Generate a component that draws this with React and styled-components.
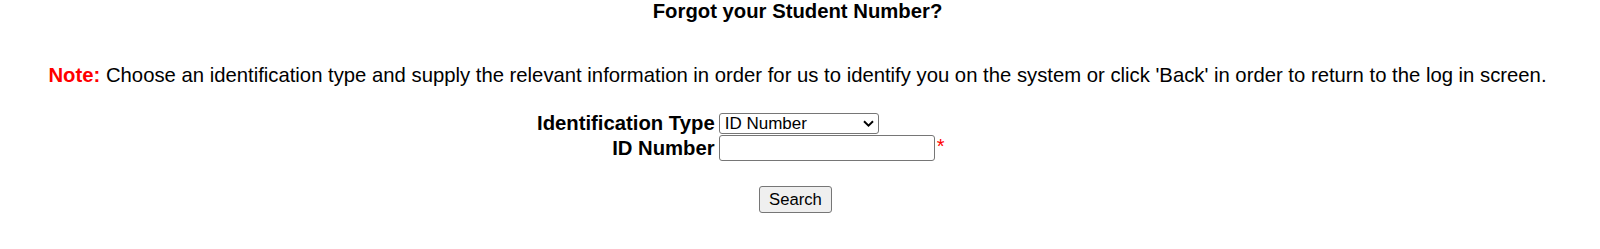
import React from 'react';
import styled, { createGlobalStyle } from 'styled-components';

const GlobalStyle = createGlobalStyle`
  html, body {
    margin: 0;
    padding: 0;
    background: #fff;
  }
  body {
    font-family: "Liberation Sans", Arial, sans-serif;
    color: #000;
  }
`;

const Page = styled.div`
  display: flex;
  flex-direction: column;
  align-items: center;
  box-sizing: border-box;
  width: 1600px;
  padding: 1px 5px 0 0;
  font-size: 20.3px;
`;

const Title = styled.h1`
  margin: 0;
  font-size: 20.3px;
  line-height: 20px;
  font-weight: bold;
`;

const Note = styled.p`
  margin: 43px 0 0;
  line-height: 23px;
  text-align: center;
  white-space: nowrap;
`;

const NoteLabel = styled.span`
  color: #ff0000;
  font-weight: bold;
`;

const Form = styled.div`
  display: grid;
  grid-template-columns: auto 1fr;
  column-gap: 4px;
  align-items: center;
  width: 526px;
  margin: 25px 0 0 5px;
`;

const Label = styled.label`
  font-weight: bold;
  text-align: right;
  line-height: 23px;
  white-space: nowrap;
`;

const Field = styled.div`
  display: flex;
  align-items: baseline;
  line-height: 23px;
`;

const SelectWrap = styled.div`
  position: relative;
  display: flex;
  align-self: center;
  margin-top: -1px;
`;

const Select = styled.select`
  appearance: none;
  box-sizing: border-box;
  width: 160px;
  height: 21px;
  font-family: "Liberation Sans", Arial, sans-serif;
  font-size: 17px;
  line-height: 19px;
  color: #000;
  background: #fff;
  border: 1px solid #767676;
  border-radius: 3px;
  padding: 0 20px 0 5px;
  margin: 0;
`;

const Chevron = styled.svg`
  position: absolute;
  right: 5px;
  top: 7px;
  width: 11px;
  height: 7px;
  pointer-events: none;
`;

const TextInput = styled.input`
  box-sizing: border-box;
  width: 216px;
  height: 26px;
  font-family: "Liberation Sans", Arial, sans-serif;
  font-size: 16.67px;
  border: 1px solid #767676;
  border-radius: 3px;
  padding: 1px 3px;
  margin: 0;
  align-self: center;
`;

const Required = styled.span`
  color: #ff0000;
  font-size: 20px;
  margin-left: 2px;
`;

const Button = styled.button`
  box-sizing: border-box;
  width: 73px;
  height: 27px;
  margin: 25px 4px 0 0;
  font-family: "Liberation Sans", Arial, sans-serif;
  font-size: 16.67px;
  color: #000;
  background: #efefef;
  border: 1px solid #767676;
  border-radius: 3px;
  padding: 0;
`;

export default function App() {
  return (
    <>
      <GlobalStyle />
      <Page>
        <Title>Forgot your Student Number?</Title>
        <Note>
          <NoteLabel>Note:</NoteLabel> Choose an identification type and supply the relevant
          information in order for us to identify you on the system or click 'Back' in order
          to return to the log in screen.
        </Note>
        <Form>
          <Label htmlFor="idType">Identification Type</Label>
          <Field>
            <SelectWrap>
              <Select id="idType" defaultValue="id">
                <option value="id">ID Number</option>
                <option value="passport">Passport Number</option>
              </Select>
              <Chevron viewBox="0 0 11 7" aria-hidden="true">
                <path d="M1 1.2 L5.5 5.6 L10 1.2" fill="none" stroke="#000" strokeWidth="1.9" />
              </Chevron>
            </SelectWrap>
          </Field>
          <Label htmlFor="idNumber">ID Number</Label>
          <Field>
            <TextInput id="idNumber" type="text" />
            <Required>*</Required>
          </Field>
        </Form>
        <Button type="button">Search</Button>
      </Page>
    </>
  );
}
